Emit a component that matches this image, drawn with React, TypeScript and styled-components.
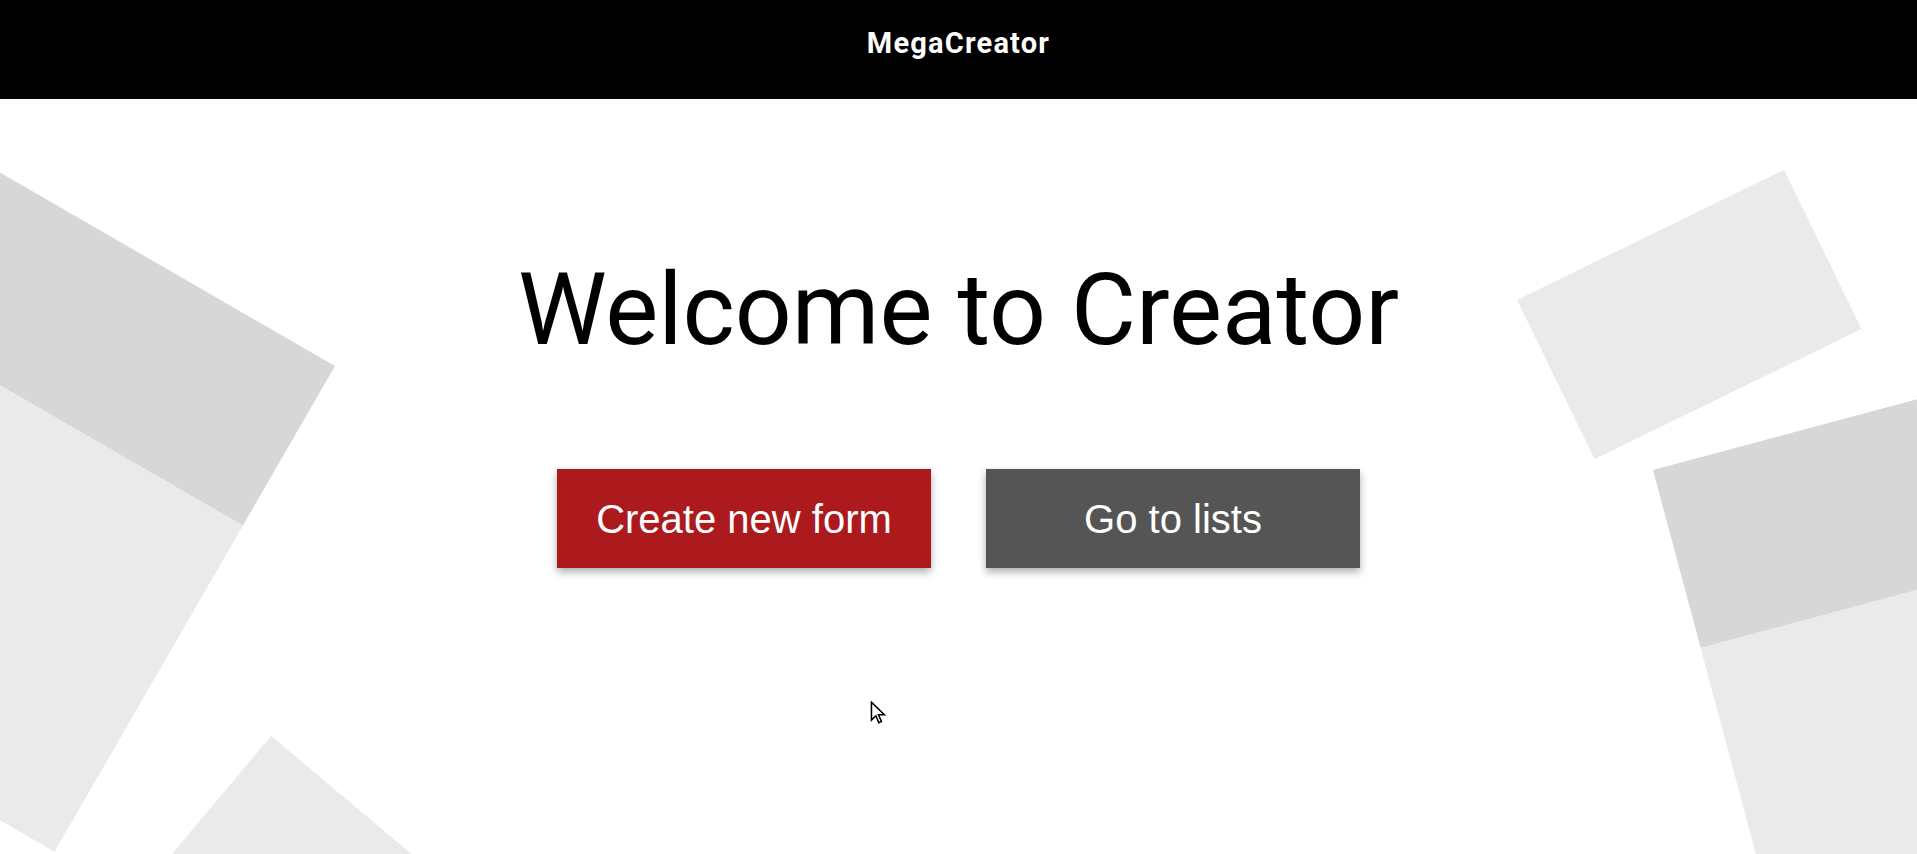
import React from "react";
import styled, { createGlobalStyle } from "styled-components";

const GlobalStyle = createGlobalStyle`
  html, body {
    margin: 0;
    padding: 0;
    background: #ffffff;
  }
  body {
    font-family: Roboto, "Liberation Sans", Arial, sans-serif;
  }
  * { box-sizing: border-box; }
`;

const Page = styled.div`
  position: relative;
  width: 100%;
  height: 100vh;
  min-height: 854px;
  display: flex;
  flex-direction: column;
  overflow: hidden;
`;

const TopBar = styled.header`
  height: 99px;
  flex: 0 0 99px;
  background: #000000;
  display: flex;
  justify-content: center;
  align-items: flex-start;
  padding-top: 26px;
`;

const Brand = styled.span`
  font-family: Roboto, "Liberation Sans", sans-serif;
  font-weight: 700;
  font-size: 29px;
  letter-spacing: 1.2px;
  line-height: normal;
  color: #ffffff;
`;

const Main = styled.main`
  position: relative;
  flex: 1;
  overflow: hidden;
`;

const Content = styled.section`
  position: relative;
  z-index: 1;
  display: flex;
  flex-direction: column;
  align-items: center;
  padding-top: 152px;
`;

const Title = styled.h1`
  margin: 0;
  font-family: Roboto, "Liberation Sans", sans-serif;
  font-weight: 400;
  font-size: 100px;
  line-height: normal;
  color: #000000;
`;

const Actions = styled.div`
  display: flex;
  gap: 55px;
  margin-top: 101px;
`;

const ActionButton = styled.button<{ $tone: "primary" | "secondary" }>`
  width: 374px;
  height: 99px;
  padding: 2px 0 0;
  border: none;
  border-radius: 0;
  cursor: pointer;
  background: ${(p) => (p.$tone === "primary" ? "#ad1a1e" : "#555555")};
  color: #ffffff;
  font-family: "Liberation Sans", Arial, sans-serif;
  font-size: 40px;
  font-weight: 400;
  box-shadow: 0 4px 8px rgba(0, 0, 0, 0.32);
`;

/* Decorative tilted panels on the free background canvas */
const Panel = styled.div<{ $origin: string; $banded?: boolean }>`
  position: absolute;
  z-index: 0;
  transform-origin: ${(p) => p.$origin};
  background: ${(p) =>
    p.$banded
      ? "linear-gradient(to bottom, #d7d7d7 0, #d7d7d7 184px, #eaeaea 184px, #eaeaea 100%)"
      : "#eaeaea"};
`;

const Cursor = styled.svg`
  position: absolute;
  left: 870px;
  top: 701px;
  width: 16px;
  height: 25px;
  z-index: 5;
`;

const panels = [
  { left: -365, top: 267, w: 700, h: 561, rot: 30, origin: "top right", banded: true },
  { left: 271, top: 637, w: 300, h: 300, rot: 40, origin: "top left", banded: false },
  { left: 1517, top: 201, w: 297, h: 177, rot: -26, origin: "top left", banded: false },
  { left: 1653, top: 371, w: 700, h: 561, rot: -15, origin: "top left", banded: true },
];

export default function App() {
  return (
    <>
      <GlobalStyle />
      <Page>
        <TopBar>
          <Brand>MegaCreator</Brand>
        </TopBar>
        <Main>
          {panels.map((p, i) => (
            <Panel
              key={i}
              $origin={p.origin}
              $banded={p.banded}
              style={{
                left: p.left,
                top: p.top,
                width: p.w,
                height: p.h,
                transform: `rotate(${p.rot}deg)`,
              }}
            />
          ))}
          <Content>
            <Title>Welcome to Creator</Title>
            <Actions>
              <ActionButton $tone="primary">Create new form</ActionButton>
              <ActionButton $tone="secondary">Go to lists</ActionButton>
            </Actions>
          </Content>
        </Main>
        <Cursor viewBox="0 0 13 21" aria-hidden="true">
          <path
            d="M1 1 L1 16 L4.7 12.4 L7.2 18.2 L9.4 17.2 L6.9 11.5 L11.8 11.5 Z"
            fill="#ffffff"
            stroke="#000000"
            strokeWidth="1.3"
            strokeLinejoin="miter"
          />
        </Cursor>
      </Page>
    </>
  );
}
